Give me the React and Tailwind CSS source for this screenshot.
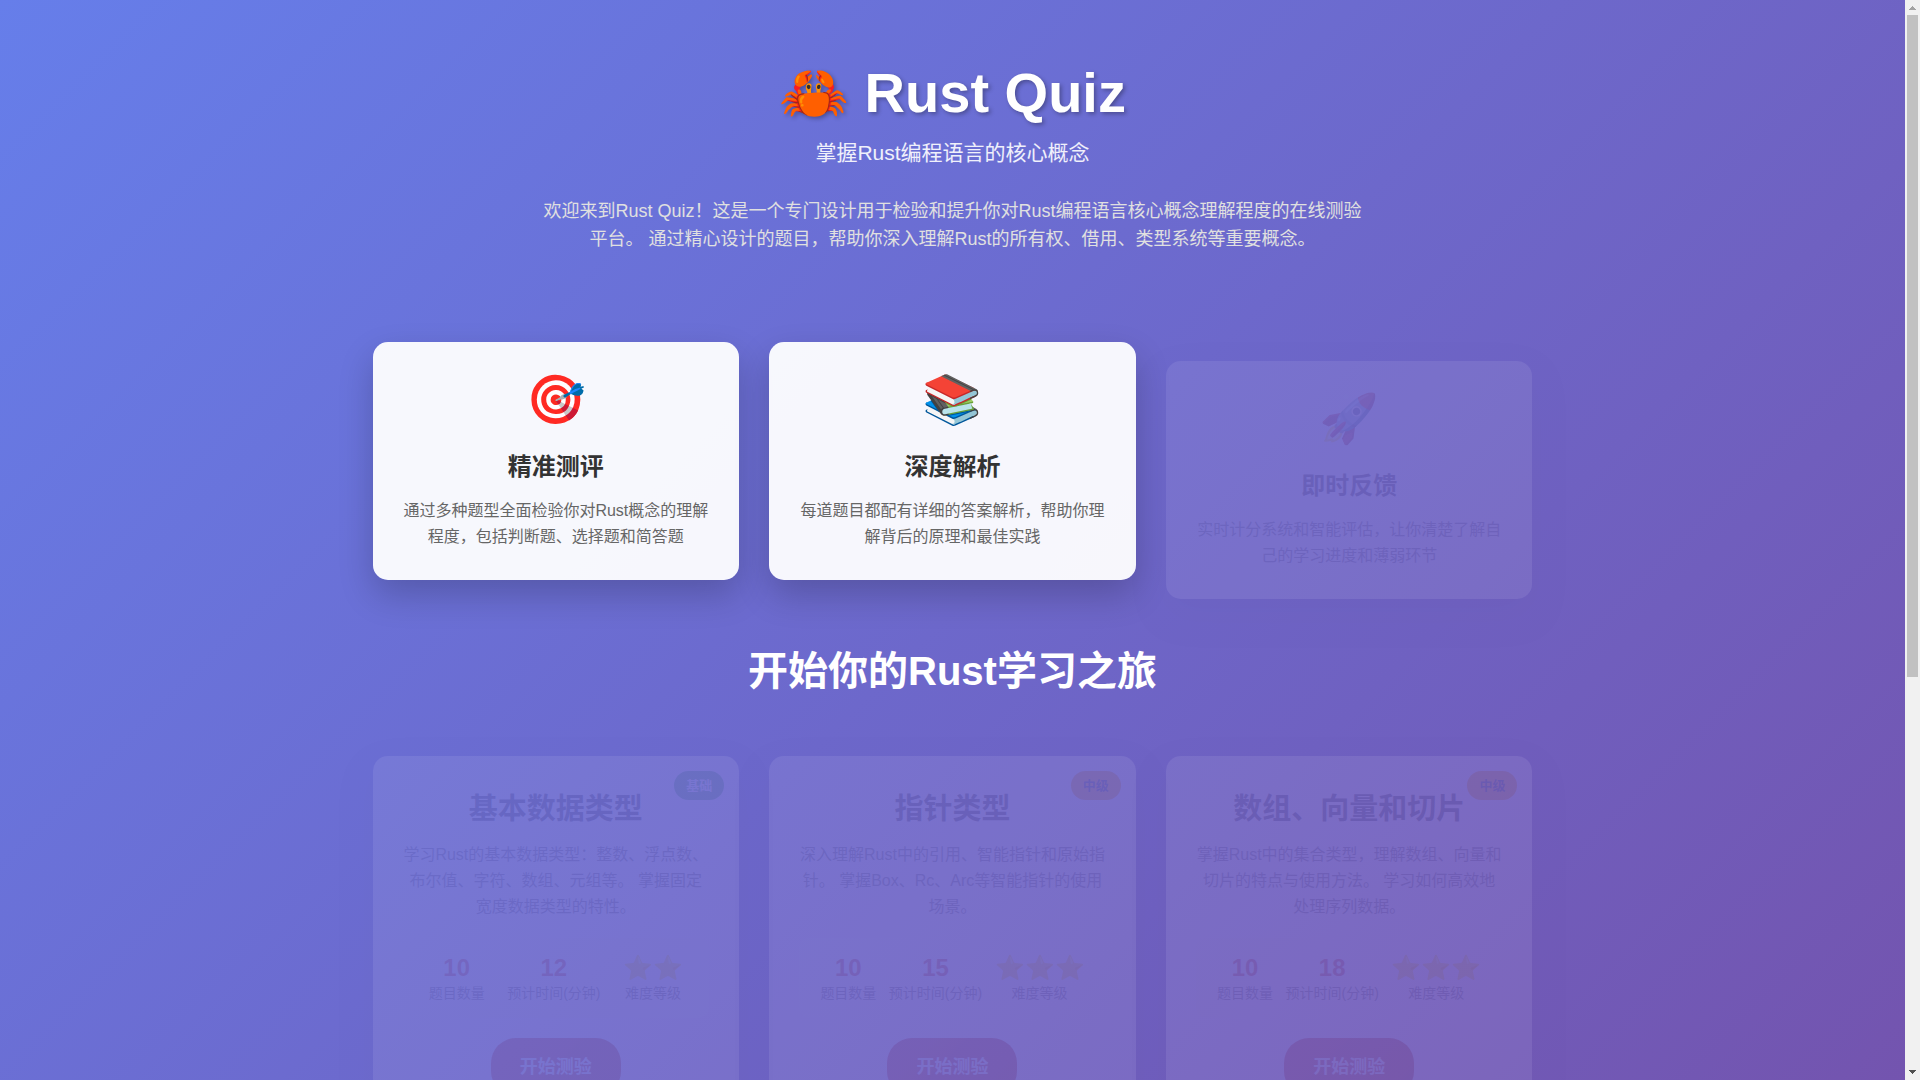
const features = [
  { icon: "🎯", title: "精准测评", text: "通过多种题型全面检验你对Rust概念的理解程度，包括判断题、选择题和简答题", shown: true },
  { icon: "📚", title: "深度解析", text: "每道题目都配有详细的答案解析，帮助你理解背后的原理和最佳实践", shown: true },
  { icon: "🚀", title: "即时反馈", text: "实时计分系统和智能评估，让你清楚了解自己的学习进度和薄弱环节", shown: false },
];

const courses = [
  {
    title: "基本数据类型",
    level: "基础",
    badge: "bg-[#4caf50] text-white",
    text: "学习Rust的基本数据类型：整数、浮点数、布尔值、字符、数组、元组等。 掌握固定宽度数据类型的特性。",
    count: 10,
    minutes: 12,
    stars: "⭐⭐",
  },
  {
    title: "指针类型",
    level: "中级",
    badge: "bg-[#ffa000] text-[#333333]",
    text: "深入理解Rust中的引用、智能指针和原始指针。 掌握Box、Rc、Arc等智能指针的使用场景。",
    count: 10,
    minutes: 15,
    stars: "⭐⭐⭐",
  },
  {
    title: "数组、向量和切片",
    level: "中级",
    badge: "bg-[#ffa000] text-[#333333]",
    text: "掌握Rust中的集合类型，理解数组、向量和切片的特点与使用方法。 学习如何高效地处理序列数据。",
    count: 10,
    minutes: 18,
    stars: "⭐⭐⭐",
  },
];

const cardBase = "rounded-[15px] bg-white/95 p-[30px] text-center shadow-[0_15px_35px_rgba(0,0,0,0.2)]";

function FeatureCard({ icon, title, text, shown }) {
  return (
    <article className={`${cardBase} ${shown ? "" : "translate-y-[19px] opacity-[0.08]"}`}>
      <div className="mb-[20px] text-[48px] leading-[56px]">{icon}</div>
      <h3 className="mb-[12px] text-[24px] leading-[38px] font-bold text-[#333333]">{title}</h3>
      <p className="text-[16px] leading-[26px] text-[#666666]">{text}</p>
    </article>
  );
}

function Stat({ value, label }) {
  return (
    <div>
      <div className="text-[24px] leading-[30px] font-bold text-[#ce422b]">{value}</div>
      <div className="text-[14px] leading-[20px] text-[#666666]">{label}</div>
    </div>
  );
}

function CourseCard({ title, level, badge, text, count, minutes, stars }) {
  return (
    <article className={`${cardBase} relative opacity-[0.08]`}>
      <span className={`absolute top-[15px] right-[15px] rounded-[15px] px-[12px] py-[4px] text-[13px] leading-[21px] font-bold ${badge}`}>
        {level}
      </span>
      <h3 className="mb-[10px] text-[29px] leading-[46px] font-bold text-[#333333]">{title}</h3>
      <p className="mb-[18px] text-[16px] leading-[26px] text-[#666666]">{text}</p>
      <div className="mb-[20px] flex justify-around rounded-[10px] bg-[#f8f9fa] p-[15px]">
        <Stat value={count} label="题目数量" />
        <Stat value={minutes} label="预计时间(分钟)" />
        <Stat value={stars} label="难度等级" />
      </div>
      <button type="button" className="rounded-[25px] bg-linear-135 from-[#ce422b] to-[#b7360f] px-[29px] py-[15px] text-[18px] leading-[28px] font-bold text-white">
        开始测验
      </button>
    </article>
  );
}

function ScrollBar() {
  return (
    <div aria-hidden="true" className="flex w-[15px] shrink-0 flex-col bg-[#f1f1f1]">
      <svg className="h-[15px] w-[15px] shrink-0" viewBox="0 0 15 15" shapeRendering="crispEdges">
        <path d="M7 6h1v1h1v1h1v1h1v1H4V9h1V8h1V7h1z" fill="#a3a3a3" />
      </svg>
      <div className="flex min-h-0 flex-1 justify-center">
        <div className="h-[63%] w-[11px] bg-[#c1c1c1]" />
      </div>
      <svg className="h-[15px] w-[15px] shrink-0" viewBox="0 0 15 15" shapeRendering="crispEdges">
        <path d="M4 5h7v1h-1v1H9v1H8v1H7V8H6V7H5V6H4z" fill="#505050" />
      </svg>
    </div>
  );
}

export default function App() {
  return (
    <div className="flex h-screen overflow-hidden font-['Liberation_Sans','Noto_Sans_CJK_SC',sans-serif]">
      <main className="min-w-0 flex-1 overflow-hidden bg-[linear-gradient(135deg,#667eea_0%,#764ba2_100%)] bg-[length:100%_1721px]">
        <div className="mx-auto max-w-[1200px] px-[20px]">
          <header className="pt-[48px] pb-[89px] text-center">
            <h1 className="text-[56px] leading-[90px] font-bold text-white [text-shadow:2px_2px_4px_rgba(0,0,0,0.3)]">🦀 Rust Quiz</h1>
            <p className="mb-[29px] text-[21px] leading-[30px] text-white/90">掌握Rust编程语言的核心概念</p>
            <p className="mx-auto max-w-[822px] text-[18px] leading-[28px] text-[#e0e0e0]">
              欢迎来到Rust Quiz！这是一个专门设计用于检验和提升你对Rust编程语言核心概念理解程度的在线测验平台。
              通过精心设计的题目，帮助你深入理解Rust的所有权、借用、类型系统等重要概念。
            </p>
          </header>
          <section className="mb-[59px] grid grid-cols-3 gap-[30px]">
            {features.map((f) => (
              <FeatureCard key={f.title} {...f} />
            ))}
          </section>
          <section>
            <h2 className="mb-[53px] text-center text-[40px] leading-[64px] font-bold text-white">开始你的Rust学习之旅</h2>
            <div className="grid grid-cols-3 gap-[30px]">
              {courses.map((c) => (
                <CourseCard key={c.title} {...c} />
              ))}
            </div>
          </section>
        </div>
      </main>
      <ScrollBar />
    </div>
  );
}
